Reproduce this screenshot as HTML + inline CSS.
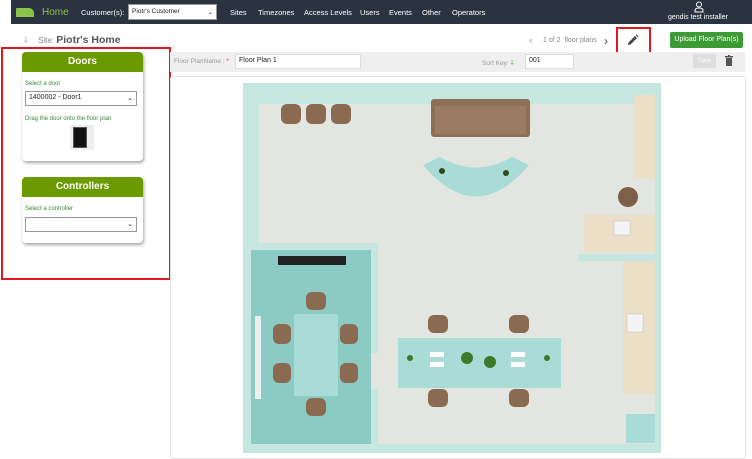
<!DOCTYPE html>
<html><head><meta charset="utf-8"><style>
*{margin:0;padding:0;box-sizing:border-box}
body{width:752px;height:459px;overflow:hidden;background:#fff;font-family:"Liberation Sans",sans-serif;position:relative}
.a{position:absolute}
.nav{left:11px;top:0;width:741px;height:24px;background:#2b3240}
.nl{color:#fff;font-size:7.5px;top:8px}
.sel{background:#fff;border:1px solid #999;font-size:7px;color:#222;padding:2px 3px}
.panel{background:#fff;border-radius:4px;box-shadow:1px 2px 3px rgba(0,0,0,.35)}
.ph{background:#6a9a00;color:#fff;font-weight:bold;font-size:10px;text-align:center;border-radius:4px 4px 0 0;height:20px;line-height:20px}
.g{color:#3c8a3c;font-size:6px}
</style></head><body>
<div class="a nav"></div>
<div class="a" style="left:16px;top:8px;width:18px;height:9px;background:#8bc34a;border-radius:1px 5px 0 0"></div>
<div class="a" style="left:42px;top:7px;color:#8bc34a;font-size:10px">Home</div>
<div class="a nl" style="left:81px">Customer(s):</div>
<div class="a sel" style="left:128px;top:4px;width:89px;height:16px;font-size:6.5px;padding-top:3px">Piotr's Customer<span style="float:right">⌄</span></div>
<div class="a nl" style="left:230px">Sites</div>
<div class="a nl" style="left:258px">Timezones</div>
<div class="a nl" style="left:304px">Access Levels</div>
<div class="a nl" style="left:360px">Users</div>
<div class="a nl" style="left:389px">Events</div>
<div class="a nl" style="left:422px">Other</div>
<div class="a nl" style="left:452px">Operators</div>
<svg class="a" style="left:694px;top:1px" width="10" height="12" viewBox="0 0 10 12"><circle cx="5" cy="3.5" r="2.5" fill="none" stroke="#fff" stroke-width="1"/><path d="M1 11V9.5Q1 7 5 7Q9 7 9 9.5V11Z" fill="none" stroke="#fff" stroke-width="1"/></svg>
<div class="a" style="left:668px;top:14px;color:#fff;font-size:7px">gendis test installer</div>

<div class="a" style="left:24px;top:35px;color:#999;font-size:8px">⸸</div>
<div class="a" style="left:38px;top:34px;color:#888;font-size:8px">Site: <b style="color:#555;font-size:10.5px">Piotr's Home</b></div>

<div class="a panel" style="left:22px;top:52px;width:121px;height:109px">
<div class="ph">Doors</div>
<div class="a g" style="left:3px;top:29px">Select a door</div>
<div class="a sel" style="left:3px;top:39px;width:112px;height:15px">1400002 - Door1<span style="float:right">⌄</span></div>
<div class="a g" style="left:3px;top:64px">Drag the door onto the floor plan</div>
<div class="a" style="left:48px;top:73px;width:24px;height:25px;background:#eee"><div class="a" style="left:3px;top:2px;width:14px;height:21px;background:#111;border:1px solid #555"></div></div>
</div>
<div class="a panel" style="left:22px;top:177px;width:121px;height:66px">
<div class="ph">Controllers</div>
<div class="a g" style="left:3px;top:29px">Select a controller</div>
<div class="a sel" style="left:3px;top:40px;width:112px;height:15px"><span style="float:right">⌄</span></div>
</div>
<div class="a" style="left:1px;top:47px;width:170px;height:233px;border:2px solid #e0191e"></div>

<div class="a" style="left:529px;top:35px;color:#aaa;font-size:11px">‹</div>
<div class="a" style="left:543px;top:37px;color:#888;font-size:7px">1 of 2 &nbsp;floor plans</div>
<div class="a" style="left:604px;top:34px;color:#444;font-size:12px">›</div>
<svg class="a" style="left:627px;top:34px" width="12" height="12" viewBox="0 0 12 12"><path d="M1 11L1.5 8.5L8 2L10 4L3.5 10.5Z M8.7 1.3L9.5 0.5L11.5 2.5L10.7 3.3Z" fill="#444"/></svg>
<div class="a" style="left:616px;top:27px;width:35px;height:35px;border:2px solid #e0191e"></div>
<div class="a" style="left:670px;top:32px;width:73px;height:16px;background:#3d9b35;border-radius:2px;color:#fff;font-size:7px;text-align:center;line-height:16px">Upload Floor Plan(s)</div>

<div class="a" style="left:170px;top:52px;width:575px;height:20px;background:#efefef"></div>
<div class="a" style="left:174px;top:58px;color:#999;font-size:6.5px">Floor PlanName : <span style="color:#e33">*</span></div>
<div class="a sel" style="left:235px;top:54px;width:126px;height:15px;border-color:#ddd">Floor Plan 1</div>
<div class="a" style="left:482px;top:58px;color:#999;font-size:6.5px">Sort Key: <span style="color:#3a3">⸸</span></div>
<div class="a sel" style="left:525px;top:54px;width:49px;height:15px;border-color:#ddd">001</div>
<div class="a" style="left:693px;top:54px;width:23px;height:14px;background:#ddd;border-radius:2px;color:#fff;font-size:6px;text-align:center;line-height:14px">Save</div>
<svg class="a" style="left:725px;top:55px" width="8" height="11" viewBox="0 0 8 11"><rect x="0" y="1" width="8" height="1.5" fill="#555"/><rect x="3" y="0" width="2" height="1" fill="#555"/><rect x="1" y="3" width="6" height="8" fill="#555"/></svg>

<div class="a" style="left:170px;top:76px;width:576px;height:383px;border:1px solid #e4e4e4;border-radius:3px"></div>

<svg class="a" style="left:0;top:0" width="752" height="459" viewBox="0 0 752 459">
<rect x="243" y="83" width="418" height="370" fill="#c6e6e0"/>
<rect x="259" y="104" width="396" height="340" fill="#e2e5e0"/>
<rect x="243" y="243" width="135" height="7" fill="#c6e6e0"/>
<rect x="251" y="250" width="120" height="194" fill="#8ccac4"/>
<rect x="371" y="243" width="7" height="110" fill="#c6e6e0"/>
<rect x="371" y="389" width="7" height="55" fill="#c6e6e0"/>
<rect x="243" y="83" width="16" height="160" fill="#c6e6e0"/>
<rect x="578" y="254" width="83" height="7" fill="#c6e6e0"/>
<rect x="634" y="95" width="21" height="84" fill="#ecdfc8"/>
<rect x="584" y="215" width="71" height="37" fill="#ecdfc8"/>
<rect x="614" y="221" width="16" height="14" fill="#f4f4f4" stroke="#bbb" stroke-width=".5"/>
<rect x="623" y="261" width="32" height="133" fill="#ecdfc8"/>
<rect x="627" y="314" width="16" height="18" fill="#f4f4f4" stroke="#bbb" stroke-width=".5"/>
<rect x="626" y="414" width="29" height="29" fill="#a9dcd6"/>
<circle cx="628" cy="197" r="10" fill="#7e604a"/>
<rect x="431" y="99" width="99" height="38" rx="3" fill="#8b6f58"/>
<rect x="435" y="106" width="91" height="28" fill="#9b7c63"/>
<path d="M423 165 L440 157 Q476 178 512 157 L529 165 Q476 228 423 165Z" fill="#a9dcd6"/>
<circle cx="442" cy="171" r="3" fill="#2d4a1c"/><circle cx="506" cy="173" r="3" fill="#2d4a1c"/>
<g fill="#8b6a52">
<rect x="281" y="104" width="20" height="20" rx="6"/><rect x="306" y="104" width="20" height="20" rx="6"/><rect x="331" y="104" width="20" height="20" rx="6"/>
<rect x="428" y="315" width="20" height="18" rx="6"/><rect x="509" y="315" width="20" height="18" rx="6"/>
<rect x="428" y="389" width="20" height="18" rx="6"/><rect x="509" y="389" width="20" height="18" rx="6"/>
<rect x="306" y="292" width="20" height="18" rx="6"/><rect x="306" y="398" width="20" height="18" rx="6"/>
<rect x="273" y="324" width="18" height="20" rx="6"/><rect x="273" y="363" width="18" height="20" rx="6"/>
<rect x="340" y="324" width="18" height="20" rx="6"/><rect x="340" y="363" width="18" height="20" rx="6"/>
</g>
<rect x="398" y="338" width="163" height="50" fill="#a9dcd6"/>
<rect x="294" y="314" width="44" height="82" fill="#a9dcd6"/>
<rect x="278" y="256" width="68" height="9" fill="#222"/>
<rect x="255" y="316" width="6" height="83" fill="#eee"/>
<g fill="#3e7a2a"><circle cx="410" cy="358" r="3"/><circle cx="547" cy="358" r="3"/><circle cx="467" cy="358" r="6"/><circle cx="490" cy="362" r="6"/></g>
<g fill="#fff"><rect x="430" y="352" width="14" height="5"/><rect x="430" y="362" width="14" height="5"/><rect x="511" y="352" width="14" height="5"/><rect x="511" y="362" width="14" height="5"/></g>
</svg>
</body></html>
